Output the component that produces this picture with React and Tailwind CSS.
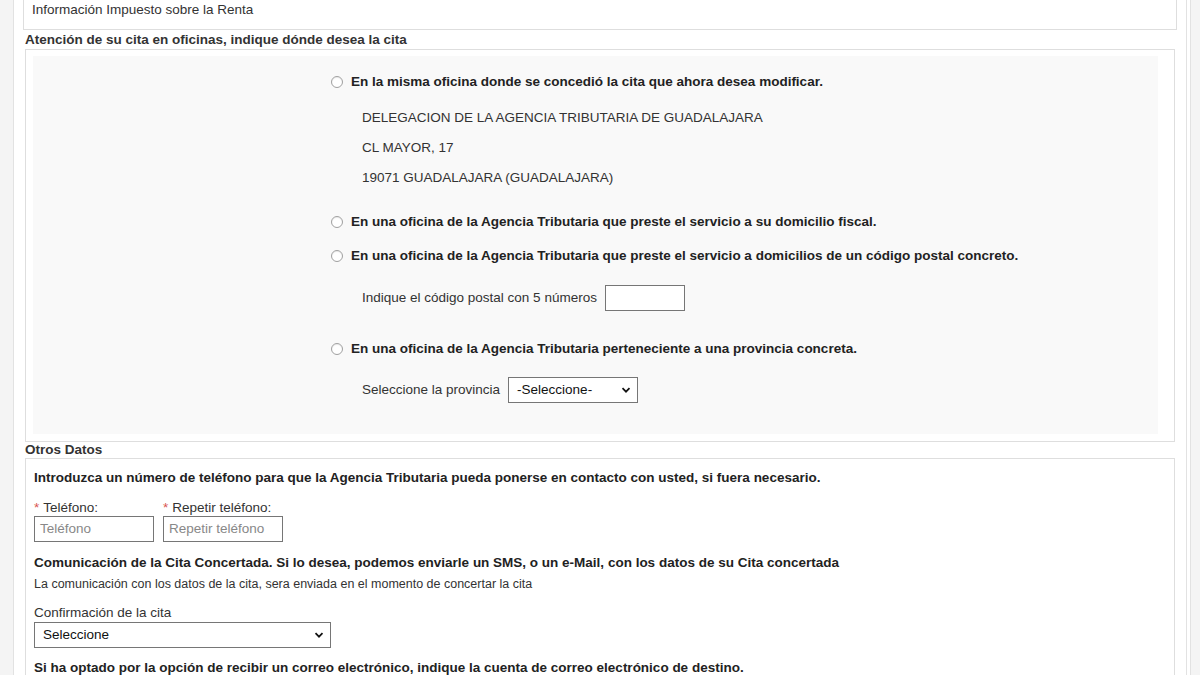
import React from "react";

const Radio = () => (
  <span className="inline-block w-[12px] h-[12px] rounded-full border border-[#a0a0a0] bg-white shrink-0 shadow-[inset_0_1px_1px_rgba(0,0,0,0.08)]" />
);

const Chevron = () => (
  <svg width="10" height="10" viewBox="0 0 10 10" className="shrink-0">
    <path d="M1.5 3.2 L5 6.7 L8.5 3.2" fill="none" stroke="#111" strokeWidth="1.7" />
  </svg>
);

const Option = ({ children, className = "" }) => (
  <div className={`flex items-center h-[20px] ${className}`}>
    <Radio />
    <span className="ml-[8px] font-bold text-[13.5px] text-[#222]">{children}</span>
  </div>
);

export default function App() {
  return (
    <div
      className="w-[1200px] h-[675px] overflow-hidden flex bg-[#f4f4f4] text-[#333]"
      style={{ fontFamily: '"Liberation Sans", Arial, sans-serif' }}
    >
      <div className="w-[13px] bg-[#f4f4f4]" />
      <div className="w-px bg-[#e2e2e2]" />
      <div className="flex-1 bg-white h-[675px] overflow-hidden">
        {/* top box */}
        <div className="mx-[9px] h-[30px] border-x border-b border-[#dedede] pl-[8px] flex items-start">
          <span className="text-[13.5px] leading-[18px] mt-[1px] text-[#333]">Información Impuesto sobre la Renta</span>
        </div>
        <div className="h-[18px] mt-[1px] pt-[1px] pl-[11px] flex items-center">
          <span className="font-bold text-[13.5px] text-[#333]">Atención de su cita en oficinas, indique dónde desea la cita</span>
        </div>
        {/* box 2 */}
        <div className="mx-[11px] h-[393px] border border-[#dedede] pt-[6px] pl-[7px] pr-[16px]">
          <div className="h-[378px] bg-[#f9f9f9] pl-[298px] pt-[16px]">
            <Option>En la misma oficina donde se concedió la cita que ahora desea modificar.</Option>
            <div className="pl-[31px] mt-[11px] text-[13.5px] text-[#333] leading-[30px]">
              <div>DELEGACION DE LA AGENCIA TRIBUTARIA DE GUADALAJARA</div>
              <div>CL MAYOR, 17</div>
              <div>19071 GUADALAJARA (GUADALAJARA)</div>
            </div>
            <Option className="mt-[19px]">En una oficina de la Agencia Tributaria que preste el servicio a su domicilio fiscal.</Option>
            <Option className="mt-[14px]">En una oficina de la Agencia Tributaria que preste el servicio a domicilios de un código postal concreto.</Option>
            <div className="pl-[31px] mt-[19px] flex items-center h-[26px]">
              <span className="text-[13.5px] text-[#333]">Indique el código postal con 5 números</span>
              <div className="ml-[8px] w-[80px] h-[26px] border border-[#767676] bg-white" />
            </div>
            <Option className="mt-[28px]">En una oficina de la Agencia Tributaria perteneciente a una provincia concreta.</Option>
            <div className="pl-[31px] mt-[18px] flex items-center h-[26px]">
              <span className="text-[13.5px] text-[#333]">Seleccione la provincia</span>
              <div className="ml-[8px] w-[130px] h-[26px] border border-[#767676] bg-white flex items-center justify-between pl-[8px] pr-[6px]">
                <span className="text-[13.5px] text-[#111]">-Seleccione-</span>
                <Chevron />
              </div>
            </div>
          </div>
        </div>
        <div className="h-[16px] pl-[11px] flex items-center">
          <span className="font-bold text-[13.5px] text-[#333]">Otros Datos</span>
        </div>
        {/* box 3 */}
        <div className="mx-[11px] h-[300px] border-x border-t border-[#dedede] pl-[8px] pt-[10px]">
          <div className="h-[18px] flex items-center font-bold text-[13.5px] text-[#222]">
            Introduzca un número de teléfono para que la Agencia Tributaria pueda ponerse en contacto con usted, si fuera necesario.
          </div>
          <div className="mt-[13px] flex gap-[9px]">
            <div>
              <div className="h-[16px] flex items-center text-[13.5px] text-[#333]">
                <span className="text-[#d9534f] mr-[4px]">*</span>Teléfono:
              </div>
              <div className="w-[120px] h-[26px] border border-[#767676] bg-white flex items-center pl-[5px] text-[13.5px] text-[#888]">
                Teléfono
              </div>
            </div>
            <div>
              <div className="h-[16px] flex items-center text-[13.5px] text-[#333]">
                <span className="text-[#d9534f] mr-[4px]">*</span>Repetir teléfono:
              </div>
              <div className="w-[120px] h-[26px] border border-[#767676] bg-white flex items-center pl-[5px] text-[13.5px] text-[#888]">
                Repetir teléfono
              </div>
            </div>
          </div>
          <div className="mt-[12px] h-[18px] flex items-center font-bold text-[13.5px] text-[#222]">
            Comunicación de la Cita Concertada. Si lo desea, podemos enviarle un SMS, o un e-Mail, con los datos de su Cita concertada
          </div>
          <div className="mt-[4px] h-[16px] flex items-center text-[12.5px] text-[#333]">
            La comunicación con los datos de la cita, sera enviada en el momento de concertar la cita
          </div>
          <div className="mt-[13px] h-[17px] flex items-center text-[13.5px] text-[#333]">
            Confirmación de la cita
          </div>
          <div className="w-[297px] h-[26px] border border-[#767676] bg-white flex items-center justify-between pl-[8px] pr-[6px]">
            <span className="text-[13.5px] text-[#111]">Seleccione</span>
            <Chevron />
          </div>
          <div className="mt-[11px] h-[18px] flex items-center font-bold text-[13.5px] text-[#222]">
            Si ha optado por la opción de recibir un correo electrónico, indique la cuenta de correo electrónico de destino.
          </div>
        </div>
      </div>
      <div className="w-px bg-[#e2e2e2]" />
      <div className="w-[3px] bg-white" />
      <div className="w-px bg-[#e2e2e2]" />
      <div className="w-[9px] bg-[#f4f4f4]" />
    </div>
  );
}
